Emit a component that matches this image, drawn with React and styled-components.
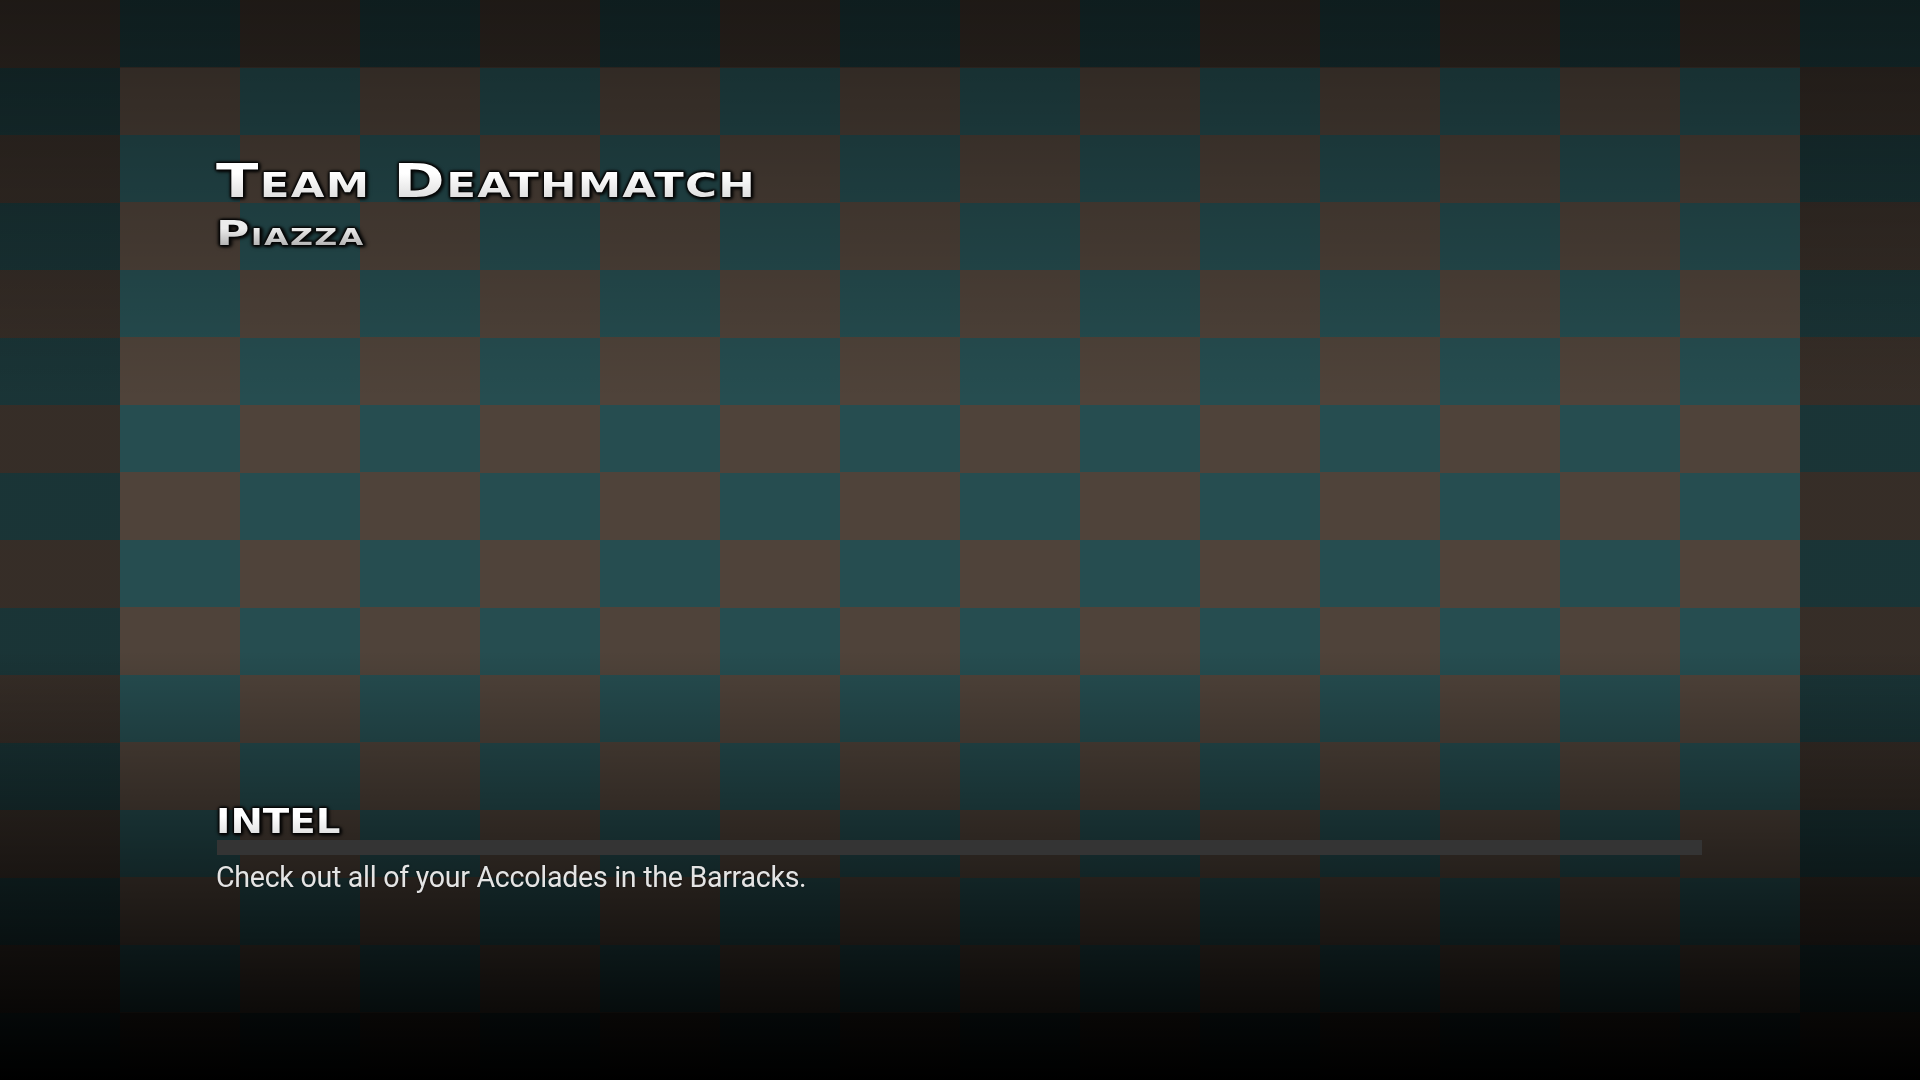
import React from "react";
import styled, { createGlobalStyle } from "styled-components";

const GlobalStyle = createGlobalStyle`
  html, body {
    margin: 0;
    padding: 0;
    background: #000;
    overflow: hidden;
  }
`;

const BROWN = "#4f433a";
const TEAL = "#264d50";
const FRAME = "rgba(0, 0, 0, 0.32)";

// checkerboard 16 x 16, outer ring dimmed, shading top and bottom
const Screen = styled.div`
  width: 1920px;
  height: 1080px;
  box-sizing: border-box;
  display: flex;
  flex-direction: column;
  padding: 157px 218px 188px 216px;
  background:
    linear-gradient(
      to bottom,
      rgba(0, 0, 0, 0.45) 0px,
      rgba(0, 0, 0, 0.22) 200px,
      rgba(0, 0, 0, 0) 400px,
      rgba(0, 0, 0, 0) 650px,
      rgba(0, 0, 0, 1) 1080px
    ),
    linear-gradient(${FRAME}, ${FRAME}) 0 0 / 120px 1080px no-repeat,
    linear-gradient(${FRAME}, ${FRAME}) 1800px 0 / 120px 1080px no-repeat,
    linear-gradient(${FRAME}, ${FRAME}) 120px 0 / 1680px 67.5px no-repeat,
    linear-gradient(${FRAME}, ${FRAME}) 120px 1012.5px / 1680px 67.5px no-repeat,
    conic-gradient(${TEAL} 0 25%, ${BROWN} 0 50%, ${TEAL} 0 75%, ${BROWN} 0) 0 0 / 240px 135px;
`;

const Header = styled.header`
  display: flex;
  flex-direction: column;
  align-items: flex-start;
`;

const Title = styled.h1`
  margin: 0;
  font-family: "DejaVu Sans", sans-serif;
  font-weight: bold;
  font-variant: small-caps;
  font-size: ${(p) => p.size}px;
  line-height: 1;
  letter-spacing: ${(p) => p.spacing || 0}px;
  white-space: nowrap;
  transform: scaleX(${(p) => p.stretch || 1});
  transform-origin: left center;
  background: linear-gradient(to bottom, ${(p) => p.top} 35%, ${(p) => p.bottom} 100%);
  -webkit-background-clip: text;
  background-clip: text;
  color: transparent;
  filter: drop-shadow(0 0 1px #000) drop-shadow(0 0 1px #000) drop-shadow(0 0 1px #111)
    drop-shadow(1px 1px 1px rgba(0, 0, 0, 0.8));
`;

const Subtitle = styled(Title).attrs({ as: "h2" })`
  margin-top: 13px;
`;

const Intel = styled.section`
  margin-top: auto;
  display: flex;
  flex-direction: column;
  align-items: stretch;
`;

const SectionLabel = styled(Title).attrs({ as: "h3" })`
  font-variant: normal;
  align-self: flex-start;
`;

const Divider = styled.div`
  height: 15px;
  margin-top: 2px;
  margin-left: 1px;
  background: #343434;
`;

const Tip = styled.p`
  margin: 8px 0 0;
  font-family: Roboto, "Liberation Sans", sans-serif;
  font-size: 29.5px;
  line-height: 1;
  color: #e4e4e4;
  letter-spacing: -0.3px;
  white-space: nowrap;
  transform: scaleX(0.97);
  transform-origin: left center;
  text-shadow: 0 0 2px rgba(0, 0, 0, 0.6);
`;

export default function App() {
  return (
    <>
      <GlobalStyle />
      <Screen>
        <Header>
          <Title size={47} stretch={1.32} spacing={1} top="#ffffff" bottom="#d6d6d6">
            Team Deathmatch
          </Title>
          <Subtitle size={33} stretch={1.38} spacing={1} top="#ececec" bottom="#a4a4a4">
            Piazza
          </Subtitle>
        </Header>
        <Intel>
          <SectionLabel size={34} stretch={1.14} spacing={0} top="#ffffff" bottom="#dcdcdc">
            INTEL
          </SectionLabel>
          <Divider />
          <Tip>Check out all of your Accolades in the Barracks.</Tip>
        </Intel>
      </Screen>
    </>
  );
}
